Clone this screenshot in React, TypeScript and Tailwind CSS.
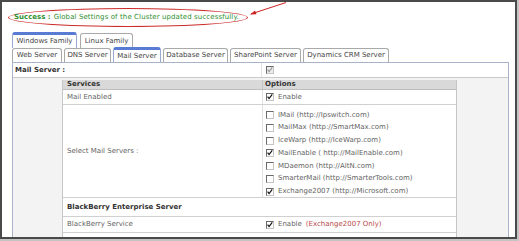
import React from "react";

function Box({ checked, disabled }: { checked?: boolean; disabled?: boolean }) {
  return (
    <span
      className={
        "relative inline-block w-[8px] h-[8px] shrink-0 border border-t-[#6a6a6a] border-l-[#6a6a6a] border-r-[#c4c4c4] border-b-[#c4c4c4] " +
        (disabled ? "bg-[#ececec]" : "bg-white")
      }
    >
      {checked && (
        <svg viewBox="0 0 8 8" className="absolute left-0 top-0 w-[6px] h-[6px]">
          <path d="M0.8 3.4 L2.8 6 L7 0.6" stroke={disabled ? "#9a9a9a" : "#111"} strokeWidth="1.6" fill="none" />
        </svg>
      )}
    </span>
  );
}

function Tab({ label, w, active, h }: { label: string; w: string; active?: boolean; h: string }) {
  return (
    <div
      className={
        "flex items-center justify-center rounded-t-[3px] bg-white border border-b-0 text-[#444] " +
        w +
        " " +
        h +
        " " +
        (active ? "border-[#9aa9cf] border-t-[3px] border-t-[#5a7bd3]" : "border-[#a9a9a9] mt-[1px]")
      }
    >
      {label}
    </div>
  );
}

const servers: [string, boolean][] = [
  ["IMail (http://Ipswitch.com)", false],
  ["MailMax (http://SmartMax.com)", false],
  ["IceWarp (http://IceWarp.com)", false],
  ["MailEnable ( http://MailEnable.com)", true],
  ["MDaemon (http://AltN.com)", false],
  ["SmarterMail (http://SmarterTools.com)", false],
  ["Exchange2007 (http://Microsoft.com)", true],
];

export default function App() {
  return (
    <div className="w-[519px] h-[241px] bg-[#c4c4c4] font-['DejaVu_Sans',sans-serif] text-[7px] leading-none">
      <div className="relative w-[517px] h-[239px] border-2 border-[#4a4a4a] bg-white overflow-hidden">
        {/* success message */}
        <div className="ml-[6px] mt-[6px] w-[240px] h-[19px] rounded-[50%] border border-[#cc2b2b] flex items-center pl-[5px] text-[#2f8f2f]">
          <span className="font-bold">Success :</span>
          <span className="ml-[3px] tracking-[0.1px]">Global Settings of the Cluster updated successfully.</span>
        </div>
        <svg className="absolute left-[244px] top-0 w-[50px] h-[20px]" viewBox="0 0 50 20">
          <line x1="5" y1="12" x2="40" y2="0.5" stroke="#cc2222" strokeWidth="1" />
          <path d="M4 12.5 L9 8.5 L10.5 12.3 Z" fill="#cc2222" />
        </svg>

        {/* tabs */}
        <div className="ml-[10px] mt-[5px] flex gap-[3px]">
          <Tab label="Windows Family" w="w-[65px]" h="h-[16px]" active />
          <Tab label="Linux Family" w="w-[53px]" h="h-[15px]" />
        </div>
        <div className="ml-[10px] -mt-[1px] flex gap-[2px] items-end">
          <Tab label="Web Server" w="w-[50px]" h="h-[14px]" />
          <Tab label="DNS Server" w="w-[47px]" h="h-[14px]" />
          <Tab label="Mail Server" w="w-[48px]" h="h-[15px]" active />
          <Tab label="Database Server" w="w-[65px]" h="h-[14px]" />
          <Tab label="SharePoint Server" w="w-[71px]" h="h-[14px]" />
          <Tab label="Dynamics CRM Server" w="w-[86px]" h="h-[14px]" />
        </div>

        {/* panel */}
        <div className="ml-[10px] w-[497px] h-[200px] border border-[#a8b2c8] bg-white">
          <div className="h-[15px] flex items-center border-b border-[#c9c9c9]">
            <div className="w-[248px] pl-[2px] font-bold text-[#333]">Mail Server :</div>
            <div className="h-full border-l border-[#e2e2e2] flex items-center pl-[4px]">
              <Box checked disabled />
            </div>
          </div>
          <div className="bg-[#f3f3f3] h-[180px] pl-[49px] pt-[2px]">
            <div className="w-[395px] h-full border-x border-[#c6c6c6] bg-white text-[#636363]">
              <div className="flex h-[10px] bg-[#d9d9d9] border-b border-[#bdbdbd] font-bold text-[#333]">
                <div className="w-[199px] pl-[4px] flex items-center">Services</div>
                <div className="flex-1 border-l border-[#c6c6c6] pl-[2px] flex items-center">Options</div>
              </div>
              <div className="flex h-[15px] border-b border-[#d0d0d0]">
                <div className="w-[199px] pl-[4px] flex items-center">Mail Enabled</div>
                <div className="flex-1 border-l border-[#e0e0e0] pl-[3px] flex items-center gap-[4px]">
                  <Box checked />
                  <span>Enable</span>
                </div>
              </div>
              <div className="flex h-[93px] border-b border-[#d0d0d0]">
                <div className="w-[199px] pl-[4px] flex items-center">Select Mail Servers :</div>
                <div className="flex-1 border-l border-[#e0e0e0] pl-[3px] pt-[6px] flex flex-col gap-[4.8px]">
                  {servers.map(([s, c]) => (
                    <div key={s} className="flex items-center gap-[4px] h-[8px]">
                      <Box checked={c} />
                      <span>{s}</span>
                    </div>
                  ))}
                </div>
              </div>
              <div className="h-[19px] flex items-center pl-[4px] font-bold text-[#333] border-b border-[#d0d0d0]">
                BlackBerry Enterprise Server
              </div>
              <div className="flex h-[16px] border-b border-[#d0d0d0]">
                <div className="w-[199px] pl-[4px] flex items-center">BlackBerry Service</div>
                <div className="flex-1 pl-[4px] flex items-center gap-[4px]">
                  <Box checked />
                  <span>Enable</span>
                  <span className="text-[#b84a4a]">(Exchange2007 Only)</span>
                </div>
              </div>
            </div>
          </div>
        </div>
      </div>
    </div>
  );
}
